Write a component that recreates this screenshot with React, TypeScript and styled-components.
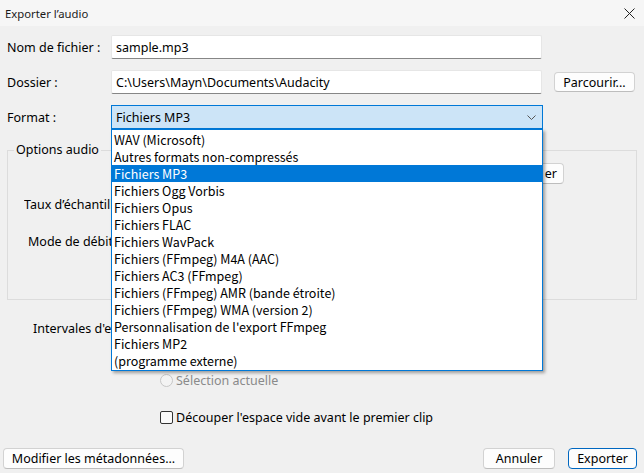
import React from "react";
import styled, { createGlobalStyle } from "styled-components";

const GlobalStyle = createGlobalStyle`
  html, body { margin: 0; padding: 0; background: #f0f0f0; }
  body { font-family: "Noto Sans", "Open Sans", sans-serif; font-size: 12.5px; color: #000; }
  * { box-sizing: border-box; }
`;

const Window = styled.div`
  width: 644px;
  height: 473px;
  display: flex;
  flex-direction: column;
  background: #f0f0f0;
  overflow: hidden;
`;

const TitleBar = styled.div`
  height: 26px;
  flex: none;
  display: flex;
  align-items: center;
  justify-content: space-between;
  padding-left: 5px;
  background: #f6f6f6;
  font-size: 11.3px;
  color: #1a1a1a;
`;

const CloseBox = styled.div`
  width: 30px;
  height: 26px;
  display: flex;
  align-items: center;
  justify-content: center;
`;

const Body = styled.div`
  flex: 1;
  display: flex;
  flex-direction: column;
  padding: 9px 7px 0 7px;
`;

const FieldRow = styled.div<{ $gap?: number }>`
  display: grid;
  grid-template-columns: 104px 431px auto;
  align-items: center;
  height: 24px;
  margin-bottom: ${(p) => p.$gap ?? 11}px;
`;

const Label = styled.span`
  font-size: 12.5px;
  white-space: nowrap;
`;

const ClippedLabel = styled.span<{ $w: number }>`
  display: block;
  width: ${(p) => p.$w}px;
  overflow: hidden;
  white-space: nowrap;
  font-size: 12.5px;
`;

const TextBox = styled.div`
  height: 24px;
  background: #fff;
  border: 1px solid #e6e6e6;
  border-bottom: 1px solid #868686;
  border-radius: 2px;
  display: flex;
  align-items: center;
  padding-left: 4px;
  font-size: 12.5px;
`;

const Button = styled.button<{ $primary?: boolean; $w?: number }>`
  height: 21px;
  width: ${(p) => (p.$w ? `${p.$w}px` : "auto")};
  padding: 0 8px;
  background: #fdfdfd;
  border: 1px solid ${(p) => (p.$primary ? "#0067c0" : "#d2d2d2")};
  border-bottom-color: ${(p) => (p.$primary ? "#0067c0" : "#bdbdbd")};
  border-radius: 4px;
  font-family: inherit;
  font-size: 12.5px;
  color: #000;
  display: flex;
  align-items: center;
  justify-content: center;
  white-space: nowrap;
`;

const BrowseButton = styled(Button)`
  margin-left: 12px;
  height: 20px;
  width: 81px;
`;

const ConfigButton = styled(Button)`
  margin-right: 72px;
  justify-content: flex-end;
  padding-right: 6px;
`;

const SelectWrap = styled.div`
  position: relative;
  width: 432px;
  height: 24px;
`;

const SelectBox = styled.div`
  height: 24px;
  background: #cce4f7;
  border: 1px solid #0078d7;
  display: flex;
  align-items: center;
  justify-content: space-between;
  padding: 0 6px 0 4px;
  font-size: 12.5px;
`;

const DropList = styled.ul`
  position: absolute;
  top: 24px;
  left: 0;
  width: 432px;
  margin: 0;
  padding: 1px 0;
  list-style: none;
  background: #fff;
  border: 1px solid #0078d7;
  box-shadow: 2px 2px 3px rgba(0, 0, 0, 0.35);
  z-index: 10;
`;

const DropItem = styled.li<{ $selected?: boolean }>`
  height: 17px;
  line-height: 17px;
  padding-left: 2px;
  font-family: "Noto Sans CJK SC", "Noto Sans", sans-serif;
  font-size: 12.5px;
  white-space: nowrap;
  background: ${(p) => (p.$selected ? "#0078d7" : "transparent")};
  color: ${(p) => (p.$selected ? "#fff" : "#000")};
`;

const Group = styled.fieldset`
  margin: 13px 0 0 0;
  padding: 0;
  min-width: 0;
  height: 158px;
  border: 1px solid #dcdcdc;
`;

const Legend = styled.legend`
  margin-left: 6px;
  padding: 0 2px;
  font-size: 12.5px;
  line-height: 16px;
`;

const GroupRow = styled.div<{ $indent: number; $top: number; $h?: number }>`
  display: flex;
  align-items: center;
  height: ${(p) => p.$h ?? 22}px;
  margin-top: ${(p) => p.$top}px;
  padding-left: ${(p) => p.$indent}px;
`;

const Spacer = styled.div`
  flex: 1;
`;

const RangeGrid = styled.div`
  display: grid;
  grid-template-columns: 127px 1fr;
  grid-auto-rows: 26px;
  align-items: center;
  margin-top: 15px;
  padding-left: 26px;
`;

const RangeLabelCell = styled.div`
  grid-column: 1;
  grid-row: 1;
`;

const OptionCell = styled.label<{ $disabled?: boolean; $row: number }>`
  grid-column: 2;
  grid-row: ${(p) => p.$row};
  display: flex;
  align-items: center;
  gap: 3px;
  font-size: 12.5px;
  color: ${(p) => (p.$disabled ? "#8a8a8a" : "#000")};
  white-space: nowrap;
`;

const RadioDot = styled.span<{ $disabled?: boolean }>`
  width: 13px;
  height: 13px;
  border-radius: 50%;
  border: 1px solid ${(p) => (p.$disabled ? "#c6c6c6" : "#5a5a5a")};
  background: ${(p) => (p.$disabled ? "#f3f3f3" : "#fafafa")};
  flex: none;
`;

const CheckBox = styled.span`
  width: 13px;
  height: 13px;
  border-radius: 2px;
  border: 1px solid #333;
  background: #fafafa;
  flex: none;
`;

const CheckRow = styled.div`
  display: grid;
  grid-template-columns: 127px 1fr;
  align-items: center;
  height: 22px;
  margin-top: 13px;
  padding-left: 26px;
`;

const Footer = styled.div`
  margin-top: auto;
  display: flex;
  align-items: center;
  gap: 13px;
  padding: 0 7px 4px 3px;
`;

const formats = [
  "WAV (Microsoft)",
  "Autres formats non-compressés",
  "Fichiers MP3",
  "Fichiers Ogg Vorbis",
  "Fichiers Opus",
  "Fichiers FLAC",
  "Fichiers WavPack",
  "Fichiers (FFmpeg) M4A (AAC)",
  "Fichiers AC3 (FFmpeg)",
  "Fichiers (FFmpeg) AMR (bande étroite)",
  "Fichiers (FFmpeg) WMA (version 2)",
  "Personnalisation de l'export FFmpeg",
  "Fichiers MP2",
  "(programme externe)",
];

export default function App() {
  return (
    <Window>
      <GlobalStyle />
      <TitleBar>
        <span>Exporter l’audio</span>
        <CloseBox>
          <svg width="11" height="11" viewBox="0 0 11 11">
            <path d="M0.5 0.5 L10.5 10.5 M10.5 0.5 L0.5 10.5" stroke="#222" strokeWidth="1" fill="none" />
          </svg>
        </CloseBox>
      </TitleBar>
      <Body>
        <FieldRow>
          <Label>Nom de fichier :</Label>
          <TextBox>sample.mp3</TextBox>
        </FieldRow>
        <FieldRow>
          <Label>Dossier :</Label>
          <TextBox>C:\Users\Mayn\Documents\Audacity</TextBox>
          <BrowseButton>Parcourir...</BrowseButton>
        </FieldRow>
        <FieldRow $gap={0}>
          <Label>Format :</Label>
          <SelectWrap>
            <SelectBox>
              <span>Fichiers MP3</span>
              <svg width="9" height="5" viewBox="0 0 9 5">
                <path d="M0.5 0.5 L4.5 4.5 L8.5 0.5" stroke="#555" strokeWidth="1" fill="none" />
              </svg>
            </SelectBox>
            <DropList>
              {formats.map((f) => (
                <DropItem key={f} $selected={f === "Fichiers MP3"}>
                  {f}
                </DropItem>
              ))}
            </DropList>
          </SelectWrap>
        </FieldRow>
        <Group>
          <Legend>Options audio</Legend>
          <GroupRow $indent={120} $top={5} $h={20}>
            <Spacer />
            <ConfigButton $w={82}>er</ConfigButton>
          </GroupRow>
          <GroupRow $indent={16} $top={10}>
            <ClippedLabel $w={87}>Taux d’échantillonnage :</ClippedLabel>
          </GroupRow>
          <GroupRow $indent={20} $top={15}>
            <ClippedLabel $w={83}>Mode de débit :</ClippedLabel>
          </GroupRow>
        </Group>
        <RangeGrid>
          <RangeLabelCell>
            <ClippedLabel $w={78}>Intervales d'exportation :</ClippedLabel>
          </RangeLabelCell>
          <OptionCell $row={1}>
            <RadioDot />
          </OptionCell>
          <OptionCell $row={2}>
            <RadioDot />
          </OptionCell>
          <OptionCell $row={3} $disabled>
            <RadioDot $disabled />
            Sélection actuelle
          </OptionCell>
        </RangeGrid>
        <CheckRow>
          <span />
          <OptionCell $row={1}>
            <CheckBox />
            Découper l'espace vide avant le premier clip
          </OptionCell>
        </CheckRow>
      </Body>
      <Footer>
        <Button $w={181}>Modifier les métadonnées...</Button>
        <Spacer />
        <Button $w={72}>Annuler</Button>
        <Button $w={69} $primary>Exporter</Button>
      </Footer>
    </Window>
  );
}
